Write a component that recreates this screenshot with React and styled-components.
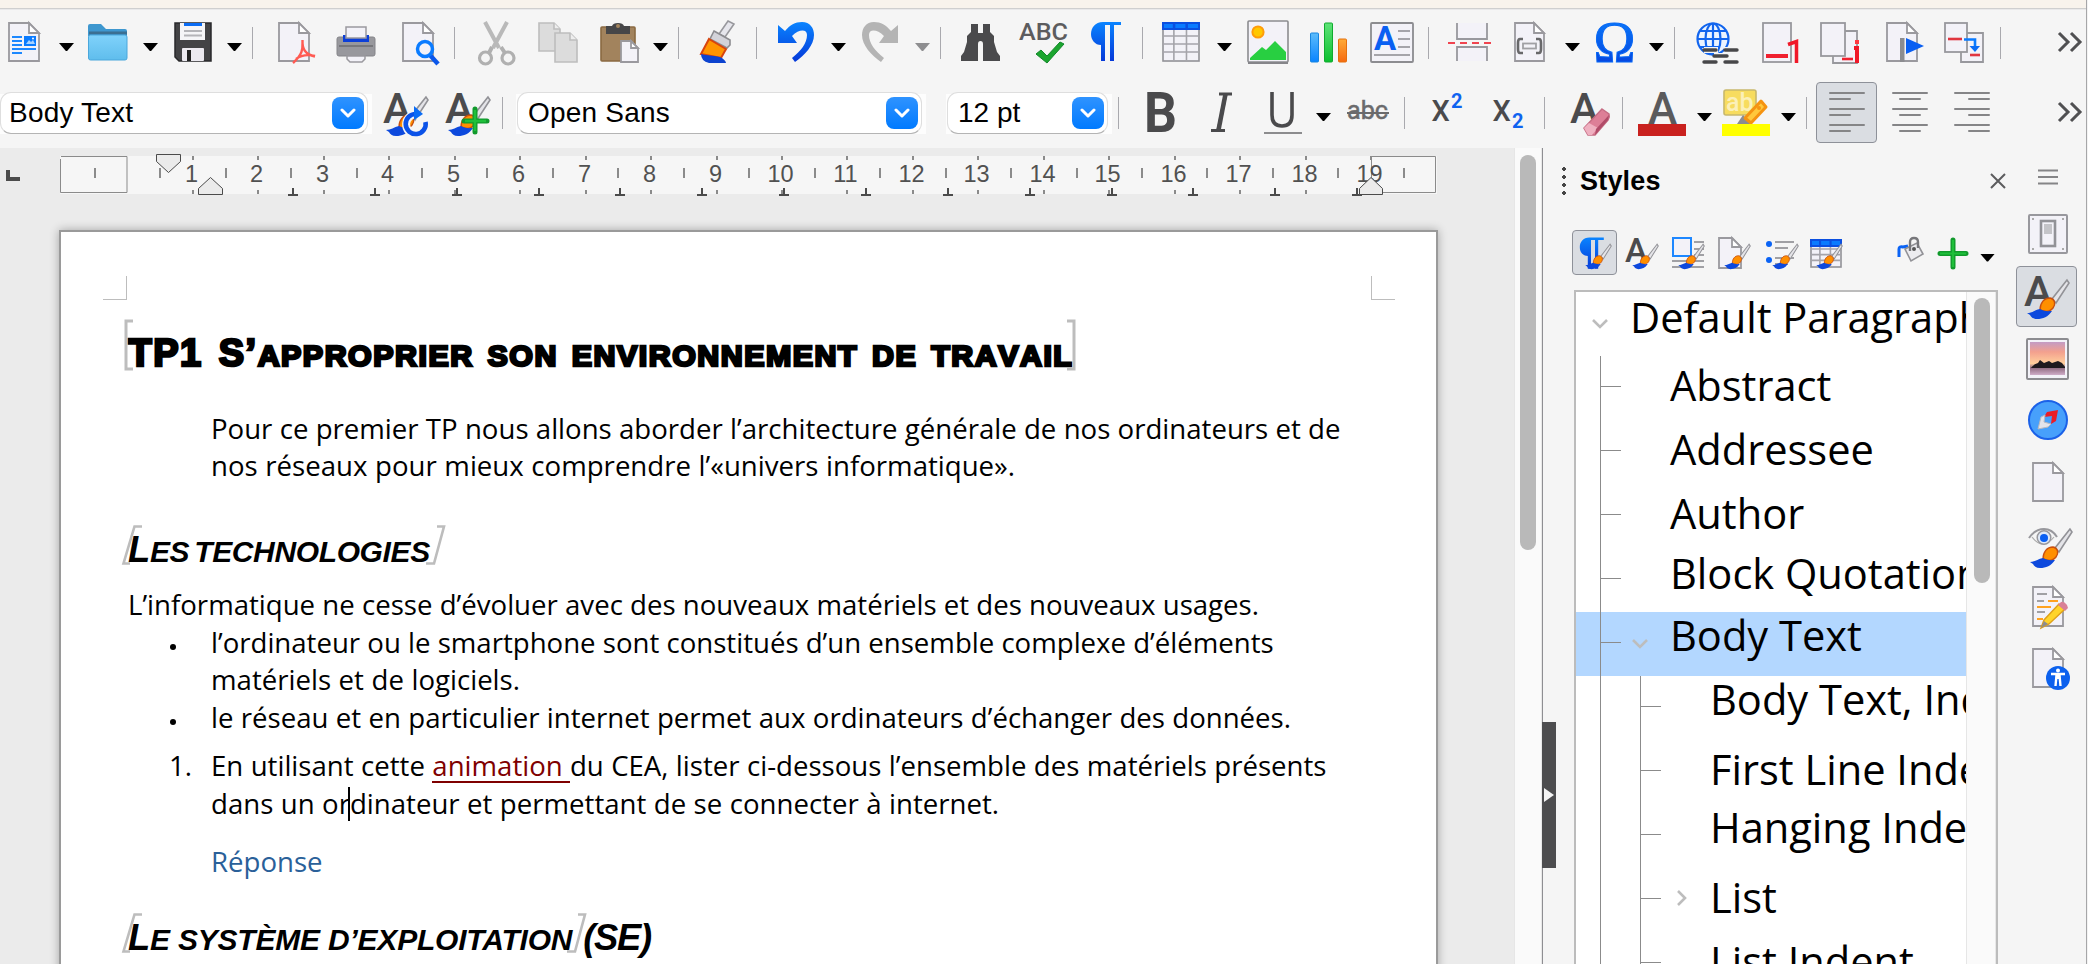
import React from 'react';
import styled, { createGlobalStyle, css } from 'styled-components';

const GlobalStyle = createGlobalStyle`
  * { box-sizing: border-box; }
  html, body { margin: 0; padding: 0; overflow: hidden; }
  body { font-family: "Liberation Sans", Arial, sans-serif; color: #000; background: #f5f5f5; }
`;

const Window = styled.div`
  width: 2088px;
  height: 964px;
  display: flex;
  flex-direction: column;
  background: #f5f5f5;
  overflow: hidden;
  position: relative;
`;
const WindowEdge = styled.div`
  position: absolute;
  right: 0;
  top: 0;
  width: 2px;
  height: 964px;
  background: #f3f3f3;
  border-left: 1px solid #a6a6a8;
`;
const TitleStrip = styled.div`
  flex: none;
  height: 10px;
  background: #f8f3ec;
  border-bottom: 1px solid #e9e9ea;
  box-shadow: inset 0 -1px 0 #cfcfcf;
`;
const Toolbar = styled.div`
  flex: none;
  height: 66px;
  margin-top: ${p => p.$top || 0}px;
  display: flex;
  align-items: center;
`;
const Icon = styled.svg`
  flex: none;
  display: block;
  overflow: visible;
  margin-left: ${p => p.$gap || 0}px;
`;
const Separator = styled.div`
  flex: none;
  width: 1px;
  height: 32px;
  margin-left: ${p => p.$gap}px;
  margin-top: 2px;
  background: #a9a9ae;
`;
const ArrowShape = styled.div`
  flex: none;
  width: 15px;
  height: 8px;
  margin-left: ${p => p.$gap}px;
  margin-top: 10px;
  background: ${p => (p.$off ? '#8e8e90' : '#000')};
  clip-path: polygon(0 0, 100% 0, 54% 100%, 46% 100%);
`;
const ComboWell = styled.div`
  flex: none;
  width: ${p => p.$width}px;
  height: 42px;
  margin: 1px 0 0 ${p => p.$gap || 0}px;
  padding: 0 4px 0 ${p => p.$lead || 0}px;
  background: linear-gradient(#f5f5f5 2px, #fdfdfd 2px);
`;
const Combo = styled.div`
  height: 42px;
  display: flex;
  align-items: center;
  justify-content: space-between;
  padding: 0 3px 0 ${p => p.$inset}px;
  background: #fff;
  border: 1px solid #dedede;
  border-bottom: 1.5px solid #b4b4b4;
  border-radius: 11px;
  font-size: 28px;
  letter-spacing: ${p => p.$track || 0}px;
  line-height: 42px;
  white-space: nowrap;
`;
const ComboButton = styled.div`
  flex: none;
  width: 32px;
  height: 32px;
  border-radius: 8px;
  background: linear-gradient(#2f93ff, #007aff);
  display: flex;
  align-items: center;
  justify-content: center;
`;
const pressed = css`
  background: #dadde2;
  border: 1px solid #8e9199;
  border-radius: 4px;
`;
const PressedButton = styled.div`
  flex: none;
  width: ${p => p.$size}px;
  height: ${p => p.$size}px;
  margin-left: ${p => p.$gap || 0}px;
  display: flex;
  align-items: center;
  justify-content: center;
  ${pressed}
`;

const Main = styled.div`
  flex: none;
  margin-top: 3px;
  height: 816px;
  display: flex;
`;
const Editor = styled.div`
  flex: none;
  width: 1514px;
  height: 816px;
  background: #ebebeb;
  overflow: hidden;
`;
const Page = styled.div`
  margin: 0 0 0 59px;
  width: 1379px;
  height: 760px;
  border: 2px solid #9a9a9a;
  background: #fff;
  box-shadow: 0 0 9px rgba(0, 0, 0, 0.3);
`;
const CropMarks = styled.div`
  margin: 44px 41px 0 42px;
  height: 24px;
  display: flex;
  justify-content: space-between;
`;
const CropMark = styled.div`
  width: 24px;
  height: 24px;
  border-bottom: 1px solid #bdbdbd;
  ${p => (p.$right ? 'border-left' : 'border-right')}: 1px solid #bdbdbd;
`;
const Title = styled.h1`
  position: relative;
  margin: 29px 0 0 67.5px;
  font: bold 38px/48px "Liberation Sans", Arial, sans-serif;
  font-kerning: none;
  letter-spacing: 1.5px;
  word-spacing: 4px;
  -webkit-text-stroke: 2.6px #000;
  paint-order: stroke fill;
  white-space: nowrap;
`;
const Heading = styled.h2`
  position: relative;
  margin: ${p => p.$top}px 0 0 67px;
  font: italic bold 36.4px/40px "Liberation Sans", Arial, sans-serif;
  letter-spacing: ${p => p.$track}px;
  word-spacing: ${p => p.$words || 0}px;
  white-space: nowrap;
`;
const Small = styled.span`
  font-size: ${p => p.$scale || 0.824}em;
  text-transform: uppercase;
`;
const Tail = styled.span`
  margin-left: 11px;
  letter-spacing: -1.3px;
`;
const FieldBracket = styled.svg`
  position: absolute;
  left: ${p => p.$x}px;
  top: ${p => p.$y}px;
  overflow: visible;
`;
const Paragraph = styled.div`
  margin: ${p => p.$top || 0}px 0 0 ${p => (p.$indent ? 150 : 67)}px;
  color: ${p => p.$color || '#000'};
  position: relative;
`;
const Line = styled.div`
  width: ${p => p.$width}px;
  height: 37.6px;
  font: 27.6px/37.6px "Open Sans", sans-serif;
  text-align-last: justify;
  white-space: nowrap;
`;
const ListMark = styled.span`
  position: absolute;
  left: ${p => p.$x}px;
  top: 0;
  font: 27.6px/37.6px "Open Sans", sans-serif;
`;
const Bullet = styled.span`
  position: absolute;
  left: -41px;
  top: 20px;
  width: 6px;
  height: 6px;
  border-radius: 3px;
  background: #000;
`;
const Link = styled.span`
  color: #7f0000;
  border-bottom: 2px solid #7f0000;
  display: inline-block;
  height: 36px;
  line-height: 37.6px;
  vertical-align: top;
  white-space: pre;
`;
const Caret = styled.span`
  display: inline-block;
  width: 2px;
  height: 34px;
  margin: 2px 0 0 -2px;
  background: #000;
  vertical-align: top;
`;

const ScrollTrack = styled.div`
  flex: none;
  width: ${p => p.$width}px;
  padding: ${p => p.$pad}px 0 0 ${p => p.$inset}px;
  background: #fafafa;
  border-left: 1px solid #e6e6e6;
  border-right: 1px solid #e8e8e8;
`;
const ScrollThumb = styled.div`
  width: 16px;
  height: ${p => p.$length}px;
  border-radius: 8px;
  background: #b9b9b9;
`;
const Splitter = styled.div`
  flex: none;
  width: 14px;
  height: 816px;
  border-left: 1px solid #8e8e92;
  padding-top: 574px;
`;
const SplitterHandle = styled.div`
  width: 14px;
  height: 146px;
  margin-left: -1px;
  background: #4d4d4f;
  display: flex;
  align-items: center;
  padding-left: 2px;
`;
const SplitterArrow = styled.div`
  width: 10px;
  height: 14px;
  background: #f5f5f5;
  clip-path: polygon(0 0, 100% 50%, 0 100%);
`;
const Panel = styled.div`
  flex: none;
  width: 442px;
  display: flex;
  flex-direction: column;
`;
const PanelHeader = styled.div`
  flex: none;
  height: 64px;
  display: flex;
  align-items: center;
  padding: 1px 0 0 6px;
`;
const Grip = styled.div`
  flex: none;
  width: 4px;
  height: 28px;
  margin-right: 14px;
  background: radial-gradient(circle at 2px 2px, #444 1.7px, transparent 2px) 0 0 / 4px 8px;
`;
const PanelTitle = styled.div`
  flex: none;
  width: 410px;
  padding-top: 2px;
  font-weight: bold;
  font-size: 27px;
  letter-spacing: 0.2px;
`;
const PanelTools = styled.div`
  flex: none;
  height: 78px;
  display: flex;
  align-items: center;
  padding: 3px 0 0 16px;
`;
const ListBox = styled.div`
  flex: none;
  margin-left: 18px;
  width: 424px;
  height: 690px;
  border: 2px solid #bcbcbc;
  background: #fff;
  display: flex;
`;
const Tree = styled.div`
  flex: none;
  width: 390px;
  overflow: hidden;
`;
const TreeRow = styled.div`
  height: 64px;
  display: flex;
  padding-left: ${p => (p.$root ? 16 : 24)}px;
  background: ${p => (p.$selected ? '#b3d7ff' : 'transparent')};
`;
const Guide = styled.div`
  flex: none;
  width: ${p => p.$width}px;
  height: 64px;
  border-left: 1px solid #8b8b8b;
  background: ${p => (p.$tick ? 'linear-gradient(#8b8b8b, #8b8b8b) 0 30px / 20px 1px no-repeat' : 'none')};
`;
const Toggle = styled.div`
  flex: none;
  width: ${p => p.$width}px;
  padding: 22px 0 0 ${p => p.$lead}px;
`;
const TreeLabel = styled.div`
  font-family: "Open Sans", sans-serif;
  font-size: 41.6px;
  line-height: ${p => (p.$base - 16.2) * 2}px;
  height: 64px;
  white-space: nowrap;
`;
const Deck = styled.div`
  flex: none;
  width: 88px;
  display: flex;
  flex-direction: column;
  align-items: flex-start;
`;
const DeckItem = styled.div`
  flex: none;
  display: flex;
  margin: ${p => p.$top}px 0 0 ${p => p.$left}px;
`;

/* ---------- icon drawings ---------- */

const Ico = ({ w = 40, h = 44, gap, children }) => (
  <Icon $gap={gap} width={w} height={h} viewBox={`0 0 ${w} ${h}`} fill="none">{children}</Icon>
);

const Sheet = ({ x = 0, y = 0, w = 31, h = 39, fold = 10, fill = '#f3f2f8', stroke = '#9a999e' }) => (
  <g transform={`translate(${x} ${y})`} stroke={stroke} strokeWidth="1.8" fill={fill}>
    <path d={`M1 1H${w - fold}L${w} ${fold + 1}V${h}H1Z`} />
    <path d={`M${w - fold} 1V${fold + 1}H${w}Z`} fill="#fff" />
  </g>
);

/* brush drawn in a 44 × 44 box */
const BrushMark = () => (
  <g>
    <path d="M42 5L27 24L31 28L44 8Z" fill="#e4e4e8" stroke="#929297" strokeWidth="1.6" />
    <path d="M15 35C15 28 19 23 25 23C30 24 31 29 28 33C25 37 20 37 15 35Z" fill="#ff8f00" stroke="#c9500e" strokeWidth="1.4" />
    <path d="M2 38C7 38 10 35 15 34C20 37 24 36 27 36C23 42 18 44 12 44C8 44 6 42 5 40Z" fill="#0d49dd" />
  </g>
);

const LetterA = ({ x, y, size, color = '#4b4b4d' }) => (
  <text x={x} y={y} fontSize={size} fontFamily="Roboto, sans-serif" fontWeight="500" fill={color}>A</text>
);

const Pilcrow = () => (
  <path d="M31 2H13C5 2 1 8 1 14C1 20 5 25 11 25V41H15V5H20V41H24V5H31Z" fill="url(#blueFade)" />
);

const Grid = ({ w = 36, h = 38 }) => (
  <g>
    <rect x="1" y="1" width={w} height={h} fill="#f3f2f8" stroke="#929297" strokeWidth="1.6" />
    <path d={`M${w * 0.33} 8V${h}M${w * 0.68} 8V${h}M1 ${h * 0.37}H${w}M1 ${h * 0.58}H${w}M1 ${h * 0.79}H${w}`} stroke="#a5a4aa" strokeWidth="1.6" />
    <rect x="0" y="0" width={w + 2} height="8" fill="#0b4fe0" />
    <path d={`M2 4H${w * 0.3}M${w * 0.37} 4H${w * 0.65}M${w * 0.72} 4H${w}`} stroke="#0a7bff" strokeWidth="4" />
  </g>
);

const NewDoc = p => (
  <Ico w={34} {...p}>
    <Sheet y={2} />
    <path d="M4 17H14M4 21H14M4 25H14M4 29H28M4 33H14" stroke="#1d87ff" strokeWidth="2" />
    <rect x="16" y="16" width="12" height="10" fill="#0a7bff" />
    <path d="M18 24L21 20L23 22L25 20L27 24Z" fill="#a8d2ff" /><circle cx="25" cy="18.5" r="1" fill="#fff" />
  </Ico>
);
const Folder = p => (
  <Ico {...p}>
    <path d="M0 6Q0 4 2 4H13L18 9H37Q39 9 39 11V16H0Z" fill="#3e97cf" />
    <path d="M1 13H39" stroke="#3b6f92" strokeWidth="3" />
    <rect x="0.5" y="15" width="38.5" height="25" rx="2" fill="url(#folderFade)" stroke="#4aa7dc" />
  </Ico>
);
const Save = p => (
  <Ico w={38} {...p}>
    <path d="M1 3H37V41H5L1 37Z" fill="#434345" stroke="#29292b" strokeWidth="1.5" />
    <rect x="6" y="3" width="25" height="17" fill="#f5f5f7" />
    <rect x="10" y="3" width="18" height="3" fill="#0a6cf5" />
    <path d="M10 11H28M10 15.500H28" stroke="#b4b4b8" strokeWidth="2" />
    <rect x="8" y="28" width="22" height="13" rx="1" fill="#eceaf0" />
    <rect x="13" y="30" width="4" height="11" fill="#222" />
  </Ico>
);
const Pdf = p => (
  <Ico w={38} {...p}>
    <Sheet y={2} />
    <path d="M24.500 20C24.500 28 26 33 15 43M24.500 20C24 29 27 34 37 36.500M18 39C22 36 29 34 37 36" stroke="#ff5a52" strokeWidth="2.400" />
  </Ico>
);
const Printer = p => (
  <Ico {...p}>
    <rect x="1" y="17" width="38" height="19" rx="2" fill="#98989d" stroke="#858589" />
    <rect x="7" y="15" width="26" height="7" fill="#0c3fd8" />
    <path d="M10 7H30V18H10Z" fill="#f3f2f8" stroke="#9a999e" strokeWidth="1.5" />
    <path d="M3 26H37" stroke="#77777b" strokeWidth="2" />
    <path d="M11 36H29V39L26 42H14L11 39Z" fill="#f3f2f8" stroke="#9a999e" strokeWidth="1.5" />
  </Ico>
);
const Preview = p => (
  <Ico w={38} {...p}>
    <Sheet y={2} />
    <path d="M27 34L36 44" stroke="#0b57ea" strokeWidth="4.500" />
    <circle cx="23" cy="29" r="7.500" fill="#f3f2f8" stroke="#0a7bff" strokeWidth="3.500" />
  </Ico>
);
const Cut = p => (
  <Ico w={38} {...p}>
    <path d="M7 2L21 28M29 2L15 28" stroke="#b9b9b9" strokeWidth="4" />
    <circle cx="7.500" cy="38" r="6" stroke="#b0b0b0" strokeWidth="3.200" />
    <circle cx="30" cy="38" r="6" stroke="#b0b0b0" strokeWidth="3.200" />
    <path d="M14 27L11 33M23 27L27 33" stroke="#b0b0b0" strokeWidth="4" />
  </Ico>
);
const Copy = p => (
  <Ico {...p}>
    <g stroke="#bdbdbd" strokeWidth="1.6" fill="#dcdcdc">
      <path d="M1 3H16L22 9V31H1Z" /><path d="M16 3V9H22" fill="#eee" />
      <path d="M17 13H32L39 20V42H17Z" /><path d="M32 13V20H39" fill="#eee" />
    </g>
  </Ico>
);
const Paste = p => (
  <Ico {...p}>
    <rect x="1" y="7" width="34" height="34" rx="1" fill="#a2835d" stroke="#8a6a42" strokeWidth="1.6" />
    <path d="M6 6H12Q13 3 18 3Q23 3 24 6H30V14H6Z" fill="#464648" /><circle cx="18" cy="6" r="2" fill="#a2835d" />
    <Sheet x={20} y={20} w={18} h={22} fold={7} />
  </Ico>
);
const FormatBrush = p => (
  <Ico w={36} {...p}>
    <path d="M28 1L34 4L25 17L19 14Z" fill="#e6e6ec" stroke="#98989d" strokeWidth="1.600" />
    <path d="M14 11L30 20V25L27 28L10 19Z" fill="#d3d3d9" stroke="#8c8c90" strokeWidth="1.600" />
    <path d="M9 19L26 29L21 38L1 34Z" fill="#ff9500" stroke="#d8440d" strokeWidth="2" />
    <path d="M1 34C6 36 17 35 22 38Q26 41 26 43H9Q1 41 1 34Z" fill="#0d43cf" />
  </Ico>
);
const undoPath = 'M0 5L7 11C12 5 17 2 24 2C32 2 36 8 36 15C36 25 27 35 17 42L14 38C23 31 29 23 29 15C29 9 21 9 14 16L19 23H0Z';
const Undo = p => <Ico w={36} {...p}><path d={undoPath} fill="url(#blueFade)" /></Ico>;
const Redo = p => <Ico w={36} {...p}><path d={undoPath} fill="#b4b4b4" transform="translate(36 0) scale(-1 1)" /></Ico>;
const Binoculars = p => (
  <Ico {...p}>
    <path d="M10 4H17V13H22V4H29V12L33 16V22L36 32L39 36V41H22V24Q22 21 19.500 21Q17 21 17 24V41H0V36L3 32L6 22V16L10 12Z" fill="#4a4a4c" />
  </Ico>
);
const Spelling = p => (
  <Ico w={50} {...p}>
    <text x="1" y="19.500" fontFamily="Roboto, sans-serif" fontWeight="500" fontSize="24" textLength="49" lengthAdjust="spacingAndGlyphs" fill="#5c5c5e">ABC</text>
    <path d="M18 34L23 30L29 36L42 22L46 24L29 43Z" fill="#1ba52e" stroke="#12872a" />
  </Ico>
);
const Formatting = p => <Ico {...p}><g transform="translate(6 0)"><Pilcrow /></g></Ico>;
const TableIcon = p => <Ico {...p}><g transform="translate(0 2)"><Grid /></g></Ico>;
const ImageIcon = p => (
  <Ico w={44} {...p}>
    <rect x="2" y="1" width="40" height="41" rx="1" fill="#f3f2f8" stroke="#8c8c90" strokeWidth="1.600" />
    <path d="M2 43H42" stroke="#858589" strokeWidth="2" />
    <circle cx="12" cy="12" r="5.600" fill="#ffc800" stroke="#ff9d0a" strokeWidth="2" />
    <path d="M4 40V38L16 27L20 30L29 21L40 32V40Z" fill="#28cf41" />
  </Ico>
);
const ChartIcon = p => (
  <Ico w={38} {...p}>
    <rect x="0.500" y="13" width="8" height="29" rx="1" fill="url(#barBlue)" stroke="#1685e0" />
    <rect x="14.500" y="3" width="8" height="39" rx="1" fill="url(#barGreen)" stroke="#10ab2f" />
    <rect x="28.500" y="19" width="8" height="23" rx="1" fill="url(#barOrange)" stroke="#e5700d" />
  </Ico>
);
const TextBoxIcon = p => (
  <Ico w={44} {...p}>
    <rect x="1" y="3" width="42" height="39" rx="1" fill="#f3f2f8" stroke="#8c8c90" strokeWidth="1.800" />
    <text x="4" y="30" fontFamily="Roboto, sans-serif" fontWeight="700" fontSize="33" fill="#0a5ff2">A</text>
    <path d="M28 11H40M28 19H40M28 27H40M4 35H40" stroke="#a5a4aa" strokeWidth="2" />
  </Ico>
);
const PageBreak = p => (
  <Ico w={44} {...p}>
    <path d="M9 3V19H39V3M9 41V27H39V41" fill="#f3f2f8" stroke="#98989d" strokeWidth="1.800" />
    <path d="M0 23H44" stroke="#f0444f" strokeWidth="2" strokeDasharray="7 5" />
  </Ico>
);
const FieldIcon = p => (
  <Ico w={32} {...p}>
    <Sheet y={2} w={30} />
    <path d="M9 19H6Q4 19 4 23V29Q4 33 6 33H9M22 19H25Q27 19 27 23V29Q27 33 25 33H22" stroke="#68686a" strokeWidth="2.600" />
    <rect x="9" y="23.500" width="13" height="5" stroke="#a0a0a4" strokeWidth="1.800" />
  </Ico>
);
const Omega = p => (
  <Ico w={42} {...p}>
    <text x="-0.500" y="42" fontFamily="Liberation Serif, serif" fontSize="59" textLength="42" lengthAdjust="spacingAndGlyphs" fill="url(#blueFade)" stroke="#0868f5" strokeWidth="1">Ω</text>
  </Ico>
);
const Hyperlink = p => (
  <Ico w={42} {...p}>
    <g stroke="#1265ee" strokeWidth="2.200">
      <circle cx="17" cy="19" r="15.500" fill="#eaf3ff" />
      <ellipse cx="17" cy="19" rx="7.500" ry="15.500" /><path d="M17 4V34M2 19H32M4 11H30M4 27H24" />
    </g>
    <path d="M8 30H22M28 30H41M18 36H32M8 42H22M28 42H41" stroke="#f5f5f5" strokeWidth="6" />
    <path d="M8 30H20M29 30H41M18 36H31M8 42H20M29 42H41" stroke="#474749" strokeWidth="3.400" strokeLinecap="round" />
  </Ico>
);
const Footnote = p => (
  <Ico w={38} {...p}>
    <rect x="1" y="3" width="28" height="39" fill="#f3f2f8" stroke="#98989d" strokeWidth="1.800" />
    <path d="M4 36H26" stroke="#f0202f" strokeWidth="4" />
    <path d="M26 24.500L34.500 21.500V43" stroke="#f01828" strokeWidth="3.500" />
  </Ico>
);
const Endnote = p => (
  <Ico {...p}>
    <path d="M13 11H37V43H13Z" fill="#f3f2f8" stroke="#98989d" strokeWidth="1.800" />
    <rect x="1" y="3" width="24" height="33" fill="#f3f2f8" stroke="#98989d" strokeWidth="1.800" />
    <path d="M22 39H33" stroke="#f0202f" strokeWidth="2.600" />
    <path d="M34 28H37V43" stroke="#f01828" strokeWidth="4" /><rect x="35" y="20" width="4" height="4" fill="#ff3840" />
  </Ico>
);
const Bookmark = p => (
  <Ico {...p}>
    <Sheet y={2} />
    <rect x="14" y="18" width="4.500" height="24" fill="#8c8c90" />
    <path d="M20 18L38 26L20 34Z" fill="#0a5ff2" />
  </Ico>
);
const CrossRef = p => (
  <Ico {...p}>
    <path d="M17 13H39V42H17Z" fill="#f3f2f8" stroke="#98989d" strokeWidth="1.800" />
    <rect x="1" y="3" width="22" height="29" fill="#f3f2f8" stroke="#98989d" strokeWidth="1.800" />
    <path d="M4 19H18" stroke="#e03540" strokeWidth="2.600" /><path d="M26 35H36" stroke="#e03540" strokeWidth="2.600" />
    <path d="M20 19.500H31V27" stroke="#0a7bff" strokeWidth="2.600" /><path d="M25.500 26H36L31 32Z" fill="#0a6cf5" />
  </Ico>
);
const More = p => (
  <Ico w={26} h={20} {...p}>
    <path d="M2 1L11 10L2 19M14 1L23 10L14 19" stroke="#505052" strokeWidth="3" />
  </Ico>
);

const UpdateStyle = p => (
  <Ico w={44} {...p}>
    <LetterA x={-1} y={33} size={43} />
    <g transform="translate(0 2)"><BrushMark /></g>
    <path d="M34 24.500A10 10 0 1 0 42 33" stroke="#f5f5f5" strokeWidth="8" />
    <path d="M32 24A10 10 0 1 0 41.500 32" stroke="#0b52e8" strokeWidth="4.600" />
    <path d="M30 16L39 24L30 30Z" fill="#0a6cf5" />
  </Ico>
);
const NewStyle = p => (
  <Ico w={44} {...p}>
    <LetterA x={-1} y={33} size={43} />
    <g transform="translate(0 2)"><BrushMark /></g>
    <path d="M29 19V42M18 31H41" stroke="#119a2c" strokeWidth="5" strokeLinecap="round" />
    <path d="M29 20V41M19 31H40" stroke="#1fbf3a" strokeWidth="2.400" />
  </Ico>
);
const Bold = p => (
  <Ico w={30} {...p}><text x="-2" y="42" fontFamily="Roboto, sans-serif" fontWeight="700" fontSize="56" textLength="33" lengthAdjust="spacingAndGlyphs" fill="#4a4a4c">B</text></Ico>
);
const Italic = p => (
  <Ico w={22} {...p}><path d="M8 4H21M0 40.500H14M15 4L7 40" stroke="#4a4a4c" strokeWidth="3" /><path d="M14.500 4L7.500 40" stroke="#4a4a4c" strokeWidth="4.500" /></Ico>
);
const Underline = p => (
  <Ico w={38} {...p}>
    <path d="M8 2V25Q8 36 18 36Q28 36 28 25V2" stroke="#4a4a4c" strokeWidth="3.600" />
    <path d="M0 43H38" stroke="#8c8c8e" strokeWidth="2" />
  </Ico>
);
const Strike = p => (
  <Ico w={44} {...p}>
    <text x="1" y="29" fontFamily="Roboto, sans-serif" fontSize="25" textLength="41" lengthAdjust="spacingAndGlyphs" fill="#6a6a6c" stroke="#6a6a6c" strokeWidth="0.500">abc</text>
    <path d="M1 23H43" stroke="#6a6a6c" strokeWidth="2" />
  </Ico>
);
const Script = ({ sub, ...p }) => (
  <Ico w={sub ? 32 : 30} {...p}>
    <text x="-0.500" y="31" fontFamily="Roboto, sans-serif" fontWeight="500" fontSize="29" fill="#4a4a4c">X</text>
    <text x="19" y={sub ? 38 : 18} fontFamily="Roboto, sans-serif" fontWeight="700" fontSize="20" fill="#0f63f0">2</text>
  </Ico>
);
const ClearFormat = p => (
  <Ico {...p}>
    <LetterA x={0} y={33} size={43} />
    <path d="M32 19L39 24Q40 27 38 30L25 45H18L14 38Z" fill="#dd7f97" stroke="#c56c83" strokeWidth="1.500" />
    <path d="M14 38L19 33L28 38L22 45H18Z" fill="#efb0c0" /><path d="M38 30L25 45L26 39L39 25Z" fill="#b04b68" />
  </Ico>
);
const FontColor = p => (
  <Ico w={48} {...p}>
    <LetterA x={10} y={34} size={44} color="#5a5a5c" />
    <rect x="0" y="34" width="48" height="12" fill="#c9211e" />
  </Ico>
);
const Highlight = p => (
  <Ico w={48} {...p}>
    <rect x="2" y="0" width="32" height="25" rx="2" fill="#f7dc5f" stroke="#c8b86c" strokeWidth="1.600" />
    <text x="4" y="21" fontFamily="Roboto, sans-serif" fontWeight="500" fontSize="25" fill="#fbf0b8">ab</text>
    <path d="M15 34L21 25L28 32V34Z" fill="#8c8c90" />
    <path d="M23 28L39 11L44 17L29 33Z" fill="#ffc83c" stroke="#f59311" strokeWidth="3" strokeLinejoin="round" />
    <circle cx="37" cy="18" r="2" fill="#f59311" />
    <rect x="0" y="34" width="48" height="12" fill="#ffff00" />
  </Ico>
);
const Align = ({ side, ...p }) => {
  const start = { left: 0, center: 7, right: 14 }[side];
  return (
    <Ico w={36} {...p}>
      <path
        d={[3, 19, 35].map(y => `M1 ${y}H35M${start + 1} ${y + 6}H${start + 21}`).join('')}
        stroke="#858587" strokeWidth="2" strokeLinecap="round"
      />
    </Ico>
  );
};

/* small 32px style-category icons */
const miniBrush = <g transform="translate(5 4) scale(0.62 0.64)"><BrushMark /></g>;
const ParaStyle = p => <Ico w={32} h={32} {...p}><g transform="translate(0 -1) scale(0.8)"><Pilcrow /></g>{miniBrush}</Ico>;
const CharStyle = p => <Ico w={32} h={32} {...p}><LetterA x={-1} y={25} size={34} />{miniBrush}</Ico>;
const FrameStyle = p => (
  <Ico w={32} h={32} {...p}>
    <path d="M22 5H32M22 12H32M22 18H32M0 24H32M0 30H32" stroke="#a0a0a4" strokeWidth="1.800" />
    <rect x="1" y="1" width="18" height="18" fill="#f3f2f8" stroke="#1d87ff" strokeWidth="2" />{miniBrush}
  </Ico>
);
const PageStyle = p => <Ico w={32} h={32} {...p}><Sheet w={23} h={31} fold={9} />{miniBrush}</Ico>;
const ListStyle = p => (
  <Ico w={32} h={32} {...p}>
    <path d="M9 5H28M9 11H22M9 21H28M9 27H22" stroke="#a0a0a4" strokeWidth="1.800" />
    <circle cx="3" cy="7" r="3" fill="#0a63f5" /><circle cx="3" cy="23" r="3" fill="#0a63f5" />{miniBrush}
  </Ico>
);
const TableStyle = p => <Ico w={32} h={32} {...p}><g transform="translate(0 2)"><Grid w={30} h={27} /></g>{miniBrush}</Ico>;
const FillMode = p => (
  <Ico w={26} h={32} {...p}>
    <path d="M1 20V12Q1 9 5 10L10 9" stroke="#0a63f5" strokeWidth="3" />
    <path d="M7 12L19 6L25 17L13 24Z" fill="#ececf0" stroke="#929297" strokeWidth="1.600" />
    <path d="M12 14V5Q12 1 16 1Q20 1 20 5V11" stroke="#77777b" strokeWidth="2.400" /><circle cx="16" cy="12" r="2" fill="#555" />
  </Ico>
);
const AddStyle = p => (
  <Ico w={30} h={32} {...p}>
    <path d="M15 3V30M2 16.500H28" stroke="#119a2c" strokeWidth="5" strokeLinecap="round" />
    <path d="M15 3V30M2 16.500H28" stroke="#1fbf3a" strokeWidth="2.200" />
  </Ico>
);

/* sidebar deck icons */
const Properties = p => (
  <Ico h={40} {...p}>
    <rect x="1" y="1" width="38" height="38" rx="1" fill="#f3f2f8" stroke="#98989d" strokeWidth="2" />
    <rect x="13" y="7" width="14" height="25" stroke="#929297" strokeWidth="2.600" fill="#f3f2f8" />
    <rect x="16" y="10" width="8" height="10" fill="#c4c4c8" />
    <path d="M4 5H6M34 5H36M4 35H6M34 35H36" stroke="#aaa" strokeWidth="2" />
  </Ico>
);
const StylesDeck = p => <Ico w={44} {...p}><LetterA x={-1} y={31} size={43} /><BrushMark /></Ico>;
const Gallery = p => (
  <Ico w={43} h={42} {...p}>
    <rect x="1" y="1" width="41" height="40" rx="1" fill="#f3f2f8" stroke="#8c8c90" strokeWidth="2" />
    <rect x="4" y="4" width="35" height="33" fill="url(#sunset)" />
    <path d="M5 30Q8 26 12 25L14 22L18 25L23 23L26 25L32 23L36 25L39 29V30Z" fill="#1e1a1e" />
  </Ico>
);
const Navigator = p => (
  <Ico h={40} {...p}>
    <circle cx="20" cy="20" r="19" fill="#47a0fb" stroke="#1b61e8" strokeWidth="2" />
    <path d="M30 10L19 12L16 17L24 16L23 24L28 21Z" fill="#ea1c26" />
    <path d="M10 29L13 17L17 15L16 22L23 24L20 27Z" fill="#e4e4ea" stroke="#b9b9c0" />
  </Ico>
);
const PageDeck = p => <Ico w={32} h={40} {...p}><Sheet w={31} /></Ico>;
const Inspector = p => (
  <Ico w={44} h={40} {...p}>
    <path d="M1 10Q7 1 16 1Q24 1 29 9" stroke="#98989d" strokeWidth="2" />
    <path d="M4 9Q15 23 26 9" stroke="#aaa" strokeWidth="1.200" />
    <circle cx="16" cy="9.500" r="6.800" fill="#dfe9f8" stroke="#98989d" strokeWidth="1.500" /><circle cx="16" cy="10" r="4" fill="#0a5ff2" />
    <g transform="translate(0 -4)"><BrushMark /></g>
  </Ico>
);
const Changes = p => (
  <Ico w={36} h={42} {...p}>
    <Sheet w={31} h={40} />
    <path d="M5 8H15M5 15H12M5 26H13" stroke="#a0a0a4" strokeWidth="2" />
    <path d="M16 15H26M5 21H19M5 33H11" stroke="#ffa21f" strokeWidth="2" />
    <path d="M9 42L12 34L27 18L33 23L17 38Z" fill="#ffd42a" stroke="#dfa019" strokeWidth="1.400" />
    <path d="M26 19L29 16Q32 15 35 19L36 22L33 25Z" fill="#d98096" /><path d="M9 42L12 35L16 38Z" fill="#8c8c90" />
  </Ico>
);
const Accessibility = p => (
  <Ico w={38} h={42} {...p}>
    <Sheet w={31} h={39} />
    <circle cx="26" cy="30" r="12" fill="#0c60ee" />
    <circle cx="26" cy="22.500" r="2" fill="#fff" />
    <path d="M19 26H33M26 26V31M23.500 38L24.500 27M28.500 38L27.500 27" stroke="#fff" strokeWidth="2.400" />
  </Ico>
);

const Chevron = ({ right }) => (
  <svg width="16" height="16" viewBox="0 0 16 16" fill="none">
    <path d={right ? 'M2 1L9 8L2 15' : 'M1 6L8 13L15 6'} stroke="#bdbdbd" strokeWidth="2.600" />
  </svg>
);

const Gradients = () => (
  <Icon width="0" height="0">
    <defs>
      {[
        ['blueFade', '#0a84ff', '#0538d8'], ['folderFade', '#80d2fb', '#5fbdec'], ['barBlue', '#5cbcfb', '#0a84ff'],
        ['barGreen', '#5ee377', '#0cbf30'], ['barOrange', '#ffab38', '#f56a10'],
      ].map(([id, a, b]) => (
        <linearGradient key={id} id={id} x1="0" y1="0" x2="0" y2="1"><stop stopColor={a} /><stop offset="1" stopColor={b} /></linearGradient>
      ))}
      <linearGradient id="sunset" x1="0" y1="0" x2="0" y2="1">
        <stop stopColor="#c39bc4" /><stop offset="0.300" stopColor="#f3a08e" /><stop offset="0.650" stopColor="#ffcf9c" />
        <stop offset="0.780" stopColor="#8f6b80" /><stop offset="1" stopColor="#cfadc8" />
      </linearGradient>
    </defs>
  </Icon>
);

/* ---------- ruler ---------- */

const CM = 65.45;
const ORIGIN = 127.5;
const Ruler = () => {
  const marks = Array.from({ length: 19 }, (_, i) => i + 1);
  const halves = [-0.5, ...Array.from({ length: 20 }, (_, i) => i + 0.5)].filter(v => v < 19.9);
  const tabs = Array.from({ length: 14 }, (_, i) => Math.round(293 + i * 81.85));
  const at = v => Math.round(ORIGIN + v * CM);
  return (
    <Icon width="1514" height="82" viewBox="0 148 1514 82" fill="none">
      <rect x="60" y="156" width="1377" height="38" fill="#f6f6f6" />
      <path d="M61 156.500H127V192.500H60.500V159" stroke="#8b8b8b" /><path d="M1371.500 181V156.500H1435.500V192.500H1380" stroke="#8b8b8b" />
      <g stroke="#8b8b8b" strokeWidth="2">
        {halves.map(v => <path key={v} d={`M${at(v)} 168V178`} />)}
        {marks.map(v => <path key={v} d={`M${at(v)} 156V160M${at(v)} 190V194`} />)}
      </g>
      <g fontFamily="Liberation Sans, Arial, sans-serif" fontSize="23.500" fill="#515151" textAnchor="middle">
        {marks.map(v => <text key={v} x={at(v) - 1.500} y="182">{v}</text>)}
      </g>
      <path d={tabs.map(x => `M${x} 188V195M${x - 5} 195H${x + 5}`).join('')} stroke="#4b4b4b" strokeWidth="2" />
      <g fill="#ebebeb" stroke="#4b4b4b">
        <path d="M156.500 154.500H180.500V161.500L168.500 172.500L156.500 161.500Z" />
        <path d="M198.500 194.500H222.500V188.500L210.500 177.500L198.500 188.500Z" />
        <path d="M1359.500 194.500H1382.500V188.500L1371 177.500L1359.500 188.500Z" />
      </g>
      <path d="M8 170V179H20" stroke="#4b4b4b" strokeWidth="4" />
    </Icon>
  );
};

const Slanted = ({ x, close }) => (
  <FieldBracket $x={x} $y={-5} width="20" height="40" viewBox="0 0 20 40" fill="none">
    <path d={close ? 'M12 1.500H19L9 38.500H1' : 'M20 1.500H12.500L1.500 38.500H8'} stroke="#bdbdbd" strokeWidth="2.600" />
  </FieldBracket>
);
const Upright = ({ x, close }) => (
  <FieldBracket $x={x} $y={-10} width="10" height="52" viewBox="0 0 10 52" fill="none">
    <path d={close ? 'M1 2H8V50H1' : 'M9 2H2V50H9'} stroke="#bdbdbd" strokeWidth="3" />
  </FieldBracket>
);

const Field = ({ width, gap, lead, inset = 10, track, children }) => (
  <ComboWell $width={width} $gap={gap} $lead={lead}>
    <Combo $track={track} $inset={inset}>
      <span>{children}</span>
      <ComboButton>
        <svg width="16" height="12" viewBox="0 0 16 12" fill="none">
          <path d="M2 3L8 9L14 3" stroke="#fff" strokeWidth="3" strokeLinecap="round" strokeLinejoin="round" />
        </svg>
      </ComboButton>
    </Combo>
  </ComboWell>
);

const styleRows = [
  { label: 'Default Paragraph Style', depth: 0, base: 42, open: true },
  { label: 'Abstract', depth: 1, base: 46 },
  { label: 'Addressee', depth: 1, base: 46 },
  { label: 'Author', depth: 1, base: 46 },
  { label: 'Block Quotation', depth: 1, base: 42 },
  { label: 'Body Text', depth: 1, base: 40, open: true, selected: true },
  { label: 'Body Text, Indented', depth: 2, base: 40 },
  { label: 'First Line Indent', depth: 2, base: 46 },
  { label: 'Hanging Indent', depth: 2, base: 40 },
  { label: 'List', depth: 2, base: 46, closed: true },
  { label: 'List Indent', depth: 2, base: 46 },
];
const toggleWidth = [38, 49, 49];
const toggleLead = [0, 11, 15];

const StyleRow = ({ row }) => (
  <TreeRow $selected={row.selected} $root={row.depth === 0}>
    {row.depth === 2 && <Guide $width={40} />}
    {row.depth > 0 && <Guide $width={21} $tick />}
    <Toggle $width={toggleWidth[row.depth]} $lead={toggleLead[row.depth]}>
      {(row.open || row.closed) && <Chevron right={row.closed} />}
    </Toggle>
    <TreeLabel $base={row.base}>{row.label}</TreeLabel>
  </TreeRow>
);

export default function App() {
  return (
    <Window>
      <GlobalStyle />
      <TitleStrip />
      <Toolbar $top={-1}>
        <NewDoc gap={8} /><ArrowShape $gap={17} />
        <Folder gap={14} /><ArrowShape $gap={15} />
        <Save gap={16} /><ArrowShape $gap={15} />
        <Separator $gap={10} />
        <Pdf gap={25} /><Printer gap={20} /><Preview gap={26} />
        <Separator $gap={14} />
        <Cut gap={23} /><Copy gap={22} /><Paste gap={22} /><ArrowShape $gap={13} />
        <Separator $gap={10} />
        <FormatBrush gap={21} />
        <Separator $gap={20} />
        <Undo gap={21} /><ArrowShape $gap={17} />
        <Redo gap={16} /><ArrowShape $gap={17} $off />
        <Separator $gap={10} />
        <Binoculars gap={20} /><Spelling gap={17} /><Formatting gap={16} />
        <Separator $gap={18} />
        <TableIcon gap={19} /><ArrowShape $gap={15} />
        <ImageIcon gap={14} /><ChartIcon gap={20} /><TextBoxIcon gap={22} />
        <Separator $gap={14} />
        <PageBreak gap={19} /><FieldIcon gap={22} /><ArrowShape $gap={19} />
        <Omega gap={14} /><ArrowShape $gap={13} />
        <Separator $gap={10} />
        <Hyperlink gap={21} /><Footnote gap={24} /><Endnote gap={20} /><Bookmark gap={26} /><CrossRef gap={18} />
        <Separator $gap={16} />
        <More gap={56} />
      </Toolbar>
      <Toolbar $top={4}>
        <Field width={372} inset={8} track={0.2}>Body Text</Field>
        <UpdateStyle gap={12} /><NewStyle gap={18} />
        <Separator $gap={12} />
        <Field width={410} gap={13} lead={1} track={0.2}>Open Sans</Field>
        <Field width={166} gap={20} lead={1} inset={10}>12 pt</Field>
        <Separator $gap={6} />
        <Bold gap={27} /><Italic gap={35} /><Underline gap={31} /><ArrowShape $gap={14} /><Strike gap={15} />
        <Separator $gap={14} />
        <Script gap={27} /><Script gap={31} sub />
        <Separator $gap={19} />
        <ClearFormat gap={25} />
        <Separator $gap={12} />
        <FontColor gap={15} /><ArrowShape $gap={11} />
        <Highlight gap={10} /><ArrowShape $gap={11} />
        <Separator $gap={10} />
        <PressedButton $size={61} $gap={9}><Align side="left" /></PressedButton>
        <Align side="center" gap={15} /><Align side="right" gap={26} />
        <More gap={67} />
      </Toolbar>

      <Main>
        <Editor>
          <Ruler />
          <Page>
            <CropMarks><CropMark /><CropMark $right /></CropMarks>
            <Title>
              <Upright x={-5} />
              TP1 S’<Small $scale={0.8}>approprier son environnement de travail</Small>
              <Upright x={937} close />
            </Title>
            <Paragraph $top={30.500} $indent>
              <Line $width={1129.500}>Pour ce premier TP nous allons aborder l’architecture générale de nos ordinateurs et de</Line>
              <Line $width={804}>nos réseaux pour mieux comprendre l’«univers informatique».</Line>
            </Paragraph>
            <Heading $top={45.800} $track={-0.35} $words={-3}>
              <Slanted x={-6} />
              L<Small>es technologies</Small>
              <Slanted x={297} close />
            </Heading>
            <Paragraph $top={13.500}>
              <Line $width={1131}>L’informatique ne cesse d’évoluer avec des nouveaux matériels et des nouveaux usages.</Line>
            </Paragraph>
            <Paragraph $indent>
              <Bullet />
              <Line $width={1062}>l’ordinateur ou le smartphone sont constitués d’un ensemble complexe d’éléments</Line>
              <Line $width={309}>matériels et de logiciels.</Line>
            </Paragraph>
            <Paragraph $indent>
              <Bullet />
              <Line $width={1080}>le réseau et en particulier internet permet aux ordinateurs d’échanger des données.</Line>
            </Paragraph>
            <Paragraph $top={10.600} $indent>
              <ListMark $x={-42}>1.</ListMark>
              <Line $width={1115.500}>En utilisant cette <Link>animation </Link>du CEA, lister ci-dessous l’ensemble des matériels présents</Line>
              <Line $width={788}>dans un or<Caret />dinateur et permettant de se connecter à internet.</Line>
            </Paragraph>
            <Paragraph $top={20.800} $indent $color="#2a6099">
              <Line $width={112}>Réponse</Line>
            </Paragraph>
            <Heading $top={37.800} $track={-0.2}>
              <Slanted x={-6} />
              L<Small>e système d’exploitation</Small>
              <Slanted x={438} close />
              <Tail>(SE)</Tail>
            </Heading>
          </Page>
        </Editor>
        <ScrollTrack $width={28} $pad={7} $inset={5}><ScrollThumb $length={395} /></ScrollTrack>
        <Splitter><SplitterHandle><SplitterArrow /></SplitterHandle></Splitter>
        <Panel>
          <PanelHeader>
            <Grip />
            <PanelTitle>Styles</PanelTitle>
            <Icon width="16" height="16" viewBox="0 0 16 16" fill="none"><path d="M1 1L15 15M15 1L1 15" stroke="#5c5c5e" strokeWidth="2" /></Icon>
          </PanelHeader>
          <PanelTools>
            <PressedButton $size={45}><ParaStyle /></PressedButton>
            <CharStyle gap={9} /><FrameStyle gap={14} /><PageStyle gap={14} /><ListStyle gap={16} /><TableStyle gap={12} />
            <FillMode gap={56} /><AddStyle gap={14} /><ArrowShape $gap={12} />
          </PanelTools>
          <ListBox>
            <Tree>{styleRows.map(row => <StyleRow key={row.label} row={row} />)}</Tree>
            <ScrollTrack $width={30} $pad={6} $inset={7}><ScrollThumb $length={285} /></ScrollTrack>
          </ListBox>
        </Panel>
        <Deck>
          <DeckItem $top={21} $left={40}>
            <Icon width="20" height="16" viewBox="0 0 20 16" fill="none"><path d="M0 1.500H20M0 8H20M0 14.500H20" stroke="#858587" strokeWidth="2" /></Icon>
          </DeckItem>
          <DeckItem $top={29} $left={30}><Properties /></DeckItem>
          <DeckItem $top={12} $left={18}><PressedButton $size={61}><StylesDeck /></PressedButton></DeckItem>
          <DeckItem $top={11} $left={28}><Gallery /></DeckItem>
          <DeckItem $top={20} $left={30}><Navigator /></DeckItem>
          <DeckItem $top={22} $left={34}><PageDeck /></DeckItem>
          <DeckItem $top={26} $left={30}><Inspector /></DeckItem>
          <DeckItem $top={18} $left={34}><Changes /></DeckItem>
          <DeckItem $top={20} $left={34}><Accessibility /></DeckItem>
        </Deck>
      </Main>
      <WindowEdge />
      <Gradients />
    </Window>
  );
}
